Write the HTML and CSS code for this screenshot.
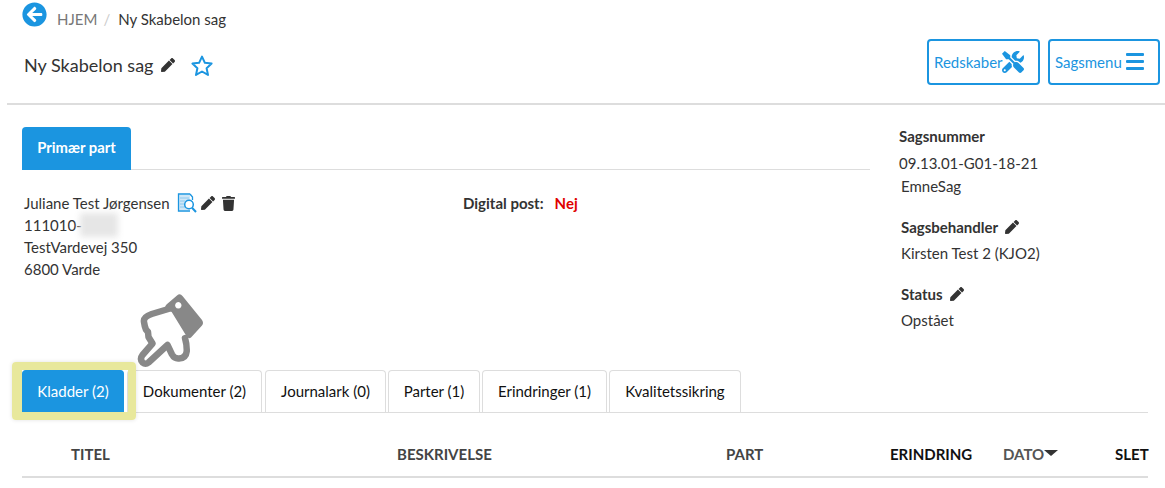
FILE: index.html
```html
<!DOCTYPE html>
<html lang="da"><head>
<meta charset="UTF-8">
<title>Ny Skabelon sag</title>
<link rel="stylesheet" href="styles.css">
</head><body>
<header class="top">
  <div class="crumbs">
    <svg class="back" viewBox="0 0 512 512"><path d="M256 504C119 504 8 393 8 256S119 8 256 8s248 111 248 248-111 248-248 248zm28.9-143.6L209.4 288H392c13.3 0 24-10.7 24-24v-16c0-13.3-10.7-24-24-24H209.4l75.5-72.4c9.7-9.3 9.9-24.8.4-34.3l-11-10.9c-9.4-9.4-24.6-9.4-33.9 0L107.7 239c-9.4 9.4-9.4 24.6 0 33.9l132.7 132.7c9.4 9.4 24.6 9.4 33.9 0l11-10.9c9.5-9.5 9.3-25-.4-34.3z"/></svg>
    <a class="home">HJEM</a><span class="sep">/</span><span>Ny Skabelon sag</span>
  </div>
  <div class="title-row">
    <h1>Ny Skabelon sag</h1>
    <svg class="pen pen-title" viewBox="0 0 512 512"><use href="#pen"/></svg>
    <svg class="star" viewBox="0 0 24 24"><path d="M12 2.600l2.900 6.200 6.700.8-5 4.600 1.400 6.700-6-3.400-6 3.400 1.400-6.700-5-4.600 6.700-.8z"/></svg>
    <div class="actions">
      <button class="btn btn-tools">Redskaber<svg viewBox="0 0 512 512"><path d="M501.1 395.7L384 278.6c-23.1-23.1-57.6-27.6-85.4-13.9L192 158.1V96L64 0 0 64l96 128h62.1l106.6 106.6c-13.6 27.8-9.2 62.3 13.9 85.4l117.1 117.1c14.6 14.6 38.2 14.6 52.7 0l52.7-52.7c14.5-14.6 14.5-38.2 0-52.7zM331.7 225c28.3 0 54.9 11 74.9 31l19.4 19.4c15.8-6.9 30.8-16.5 43.8-29.5 37.1-37.1 49.7-89.3 37.9-136.7-2.2-9-13.5-12.1-20.1-5.5l-74.4 74.4-67.9-11.3L334 98.9l74.4-74.4c6.6-6.6 3.4-17.9-5.7-20.2-47.4-11.7-99.6.9-136.6 37.9-28.5 28.5-41.9 66.1-41.2 103.6l82.1 82.1c8.1-1.9 16.5-2.9 24.7-2.9zm-103.9 82l-56.7-56.7L18.7 402.8c-25 25-25 65.5 0 90.5s65.5 25 90.5 0l123.6-123.6c-7.6-19.9-9.9-41.6-5-62.7zM64 472c-13.2 0-24-10.8-24-24 0-13.3 10.7-24 24-24s24 10.7 24 24c0 13.2-10.7 24-24 24z"/></svg></button>
      <button class="btn btn-menu">Sagsmenu<span class="bars"><i></i><i></i><i></i></span></button>
    </div>
  </div>
</header>

<svg class="defs" width="0" height="0"><defs>
  <path id="pen" d="M290.74 93.24l128.02 128.02-277.99 277.99-114.14 12.6C11.35 513.54-1.56 500.62.14 485.34l12.7-114.22 277.9-278.88zm207.2-19.06l-60.11-60.11c-18.75-18.75-49.16-18.75-67.91 0l-56.55 56.55 128.02 128.02 56.55-56.55c18.75-18.76 18.75-49.16 0-67.91z"/>
</defs></svg>

<main class="columns">
  <section class="party">
    <div class="party-tabs"><span class="party-tab">Primær part</span></div>
    <div class="party-body">
      <div class="person">
        <div class="name">Juliane Test Jørgensen
          <svg class="doc" viewBox="0 0 20 20"><path class="doc-fill" d="M2 2h11v15H2z"/><path class="doc-lines" d="M3 5h9M3 8h5M3 11h4M3 14h5"/><path class="doc-page" d="M13 1H1.500v17H13M13 1l2.500 3v3"/><circle class="doc-lens" cx="12" cy="11.500" r="4.300"/><path class="doc-handle" d="M15 14.800l4 4.200"/></svg>
          <svg class="pen" viewBox="0 0 512 512"><use href="#pen"/></svg>
          <svg class="trash" viewBox="0 0 448 512"><path d="M432 32H312l-9.400-18.700A24 24 0 0 0 281.100 0H166.800a23.720 23.720 0 0 0-21.400 13.300L136 32H16A16 16 0 0 0 0 48v32a16 16 0 0 0 16 16h416a16 16 0 0 0 16-16V48a16 16 0 0 0-16-16zM53.200 467a48 48 0 0 0 47.900 45h245.800a48 48 0 0 0 47.900-45L416 128H32z"/></svg>
        </div>
        <div class="cpr">111010-<span class="blurred"></span></div>
        <div class="addr">TestVardevej 350</div>
        <div class="addr">6800 Varde</div>
      </div>
      <div class="digital"><b>Digital post:</b><b class="no">Nej</b></div>
    </div>
  </section>
  <aside class="facts">
    <h3 class="first">Sagsnummer</h3>
    <p class="number">09.13.01-G01-18-21</p>
    <p class="kind">EmneSag</p>
    <h3>Sagsbehandler <svg class="pen" viewBox="0 0 512 512"><use href="#pen"/></svg></h3>
    <p>Kirsten Test 2 (KJO2)</p>
    <h3>Status <svg class="pen" viewBox="0 0 512 512"><use href="#pen"/></svg></h3>
    <p>Opstået</p>
  </aside>
</main>

<nav class="tabs">
  <a class="tab tab-active">Kladder (2)</a>
  <a class="tab tab-doc">Dokumenter (2)</a>
  <a class="tab tab-journal">Journalark (0)</a>
  <a class="tab tab-parter">Parter (1)</a>
  <a class="tab tab-erin">Erindringer (1)</a>
  <a class="tab tab-kval">Kvalitetssikring</a>
</nav>

<div class="cols-head">
  <span>TITEL</span><span>BESKRIVELSE</span><span>PART</span><span class="dark">ERINDRING</span><span class="sorted">DATO<i class="caret"></i></span><span class="dark slet">SLET</span>
</div>

<div class="highlight"></div>
<svg class="hand" viewBox="0 0 70 76">
  <path class="hand-body" d="M35.700 15L15.700 21Q7 24 8 29Q8.500 33 10 36.700L12 39L12.500 44L16.500 50.500L6.500 62Q3.500 66 6.500 69.500Q9.500 72 12.500 69.500L31.500 52L36 61.500Q38.500 66 43 65.500Q50 65 50.700 58.300Q51 52 49 45"/>
  <path class="hand-cuff" fill-rule="evenodd" d="M41 2.500Q44 0 46.500 3L66 27Q68 30 66 32.500L55 44.500Q53 46 51 44L35.700 19L29.500 15.500Q28.500 13 30.500 11.500Zm1.300 6.600a3.200 3.200 0 1 0 .01 0Z"/>
</svg>
</body></html>
```

FILE: styles.css
```css
*{box-sizing:border-box}
body{margin:0;height:488px;overflow:hidden;background:#fff;color:#333;font-family:Lato,"Open Sans",sans-serif;font-size:15px;line-height:22px;position:relative}
svg{fill:currentColor}
.defs{position:absolute}

.top{margin-left:7px;height:105px;border-bottom:2px solid #ddd;padding:3px 5px 0 15px}
.crumbs{display:flex;align-items:center;height:26px;color:#333;padding-top:5px}
.back{width:25px;height:25px;color:#1b95e0;margin-right:10px;margin-top:-9px}
.home{color:#777}
.sep{color:#ccc;margin:0 8px 0 6px}
.title-row{display:flex;align-items:center;margin-top:10px;height:45px;padding-left:2px}
h1{font-size:18px;font-weight:400;margin:6px 0 0;color:#333}
.pen{width:14px;height:14px;color:#333}
.pen-title{margin:6px 0 0 8px}
.star{width:24px;height:24px;margin:8px 0 0 15px;fill:none;stroke:#1b95e0;stroke-width:2;stroke-linejoin:round}
.actions{display:flex;gap:8px;margin-left:auto}
.btn{display:flex;align-items:center;height:46px;background:#fff;border:2px solid #1b95e0;border-radius:4px;color:#1b95e0;font:15px/22px Lato,sans-serif;padding:0 0 0 5px}
.btn-tools{width:113px}
.btn-tools svg{width:22px;height:22px;margin-left:-1px}
.btn-menu{width:112px}
.bars{display:flex;flex-direction:column;gap:4px;width:18px;margin-left:4px}
.bars i{display:block;height:3px;background:#1b95e0;border-radius:1px}

.columns{display:flex;padding-left:22px}
.party{width:848px;padding-top:22px}
.party-tabs{height:43px;border-bottom:1px solid #ddd}
.party-tab{display:block;width:109px;height:43px;background:#1b95e0;color:#fff;font-weight:700;font-size:14.800px;text-align:center;line-height:41px;border-radius:4px 4px 0 0}
.party-body{display:flex;padding:22px 0 0 2px}
.person{width:439px}
.name{display:flex;align-items:center;height:22px}
.doc{width:20px;height:20px;margin-left:7px;fill:none}
.doc-fill{fill:#cfe7f7}
.doc-lines{stroke:#8cc8ee;stroke-width:1}
.doc-page{stroke:#1b95e0;stroke-width:1.300;fill:none}
.doc-lens{stroke:#1b95e0;stroke-width:1.500;fill:#fff}
.doc-handle{stroke:#1b95e0;stroke-width:2}
.name .pen{margin-left:4px}
.trash{width:13px;height:15px;color:#333;margin-left:7px}
.blurred{display:inline-block;width:38px;height:24px;background:#e6e6e6;filter:blur(3px);margin-left:-2px}
.cpr{display:flex;align-items:center;height:22px}
.addr{height:21.500px}
.digital{display:flex;gap:11px;color:#333}
.no{color:#e00000}

.facts{padding:20px 0 0 29px;flex:1}
.facts h3{font-size:15px;line-height:22px;font-weight:700;margin:19px 0 0 2px;display:flex;align-items:center;gap:7px}
.facts h3.first{margin:0}
.facts p{margin:4px 0 0 2px;height:22px}
.facts p.number{margin:5px 0 0}
.facts p.kind{margin-top:1px}

.tabs{position:absolute;top:370px;left:22px;width:1126px;height:43px;border-bottom:1px solid #ddd;display:flex;gap:3px}
.tab{display:block;height:42px;line-height:40px;text-align:center;border:1px solid #ddd;border-bottom:0;border-radius:4px 4px 0 0;color:#111}
.tab-active{width:102px;background:#1b95e0;border-color:#1b95e0;color:#fff}
.tab-doc{width:135px}
.tab-journal{width:121px}
.tab-parter{width:92px;margin-left:-1px}
.tab-erin{width:125px;margin-left:-1px}
.tab-kval{width:132px;margin-left:-1px}

.cols-head{position:absolute;top:443px;left:22px;width:1126px;height:35px;border-bottom:2px solid #ddd;padding-left:49px;display:grid;grid-template-columns:326px 329px 164px 113px 112px 1fr;font-weight:700;font-size:15px;color:#444}
.dark{color:#111}
.slet{text-align:right}
.sorted{display:flex;align-items:flex-start;color:#555;font-weight:700}
.caret{width:0;height:0;border:7.500px solid transparent;border-top:6px solid #333;border-bottom:0;margin:7px 0 0 0}

.highlight{position:absolute;left:12px;top:362px;width:124px;height:58px;border:8px solid #e8e89c;border-left-width:10px;border-radius:4px;box-shadow:0 0 4px rgba(0,0,0,.12)}
.hand{position:absolute;left:136px;top:293px;width:70px;height:76px}
.hand-body{fill:#fff;stroke:#888;stroke-width:6.500;stroke-linejoin:round;stroke-linecap:round}
.hand-cuff{fill:#888}
```
